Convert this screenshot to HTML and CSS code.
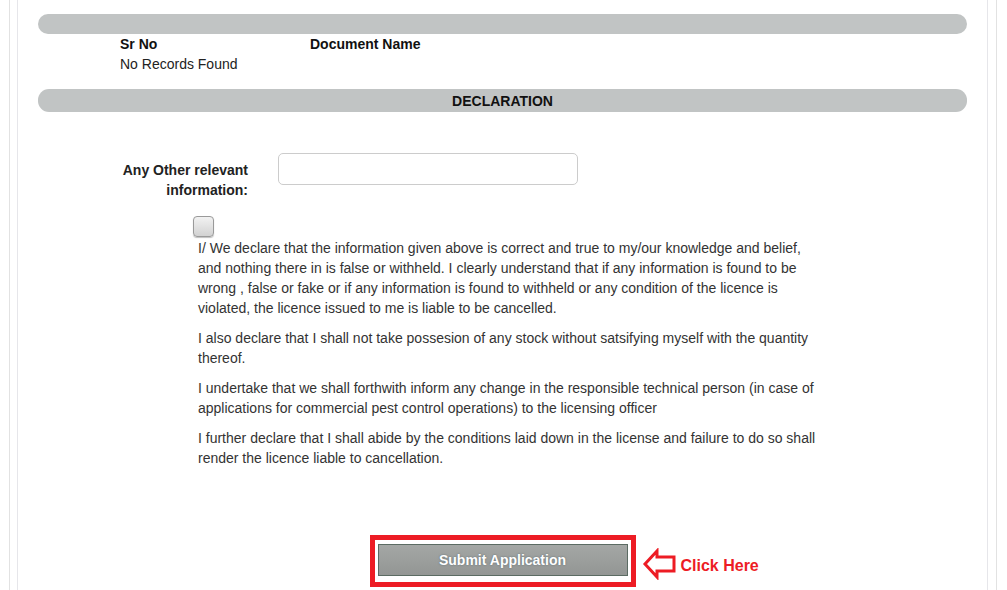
FILE: index.html
```html
<!DOCTYPE html>
<html lang="en">
<head>
  <meta charset="UTF-8">
  <title>Application - Declaration</title>
  <link rel="stylesheet" href="styles.css">
</head>
<body>
  <div class="page">
    <div class="panel">
      <div class="bar bar-empty"></div>

      <table class="docs">
        <tr>
          <th class="col-sr">Sr No</th>
          <th>Document Name</th>
        </tr>
        <tr>
          <td colspan="2">No Records Found</td>
        </tr>
      </table>

      <div class="bar">DECLARATION</div>

      <div class="form-row">
        <label for="otherInfo">Any Other relevant information:</label>
        <input type="text" id="otherInfo">
      </div>

      <div class="declaration">
        <span class="check"></span>
        <p>I/ We declare that the information given above is correct and true to my/our knowledge and belief, and nothing there in is false or withheld. I clearly understand that if any information is found to be wrong , false or fake or if any information is found to withheld or any condition of the licence is violated, the licence issued to me is liable to be cancelled.</p>
        <p>I also declare that I shall not take possesion of any stock without satsifying myself with the quantity thereof.</p>
        <p>I undertake that we shall forthwith inform any change in the responsible technical person (in case of applications for commercial pest control operations) to the licensing officer</p>
        <p>I further declare that I shall abide by the conditions laid down in the license and failure to do so shall render the licence liable to cancellation.</p>
      </div>

      <div class="actions">
        <div class="highlight">
          <button type="button">Submit Application</button>
          <div class="hint">
            <svg width="36" height="32" viewBox="0 0 36 32">
              <polygon points="3,16 15,3 15,9 32,9 32,23 15,23 15,29" fill="none" stroke="#ed1c24" stroke-width="3" stroke-linejoin="miter"/>
            </svg>
            <span>Click Here</span>
          </div>
        </div>
      </div>
    </div>
  </div>
</body>
</html>
```

FILE: styles.css
```css
body {
  margin: 0;
  padding: 0;
  font-family: "Liberation Sans", Arial, sans-serif;
  font-size: 14px;
  color: #222;
  background: #fff;
}

.page {
  margin: 0 10px 0 9px;
  border-left: 1px solid #e2e2e2;
  border-right: 1px solid #e2e2e2;
  padding: 0 8px 0 7px;
}

.panel {
  border-left: 1px solid #e6e6ea;
  border-right: 1px solid #e6e6ea;
  padding: 14px 20px 0 20px;
  height: 576px;
}

.bar {
  background: #c1c4c4;
  border-radius: 11px;
  height: 23px;
  line-height: 24px;
  text-align: center;
  font-weight: bold;
  color: #111;
}

.bar-empty {
  height: 20px;
  border-radius: 10px;
}

.docs {
  border-collapse: collapse;
  margin: 0 0 15px 82px;
}

.docs th,
.docs td {
  padding: 0;
  height: 20px;
  text-align: left;
  vertical-align: middle;
}

.docs th {
  color: #111;
}

.docs .col-sr {
  width: 190px;
}

.form-row {
  display: flex;
  align-items: flex-start;
  gap: 30px;
  margin-top: 41px;
}

.form-row label {
  width: 210px;
  text-align: right;
  font-weight: bold;
  color: #222;
  line-height: 20px;
  padding: 7px 0 0 72px;
  box-sizing: border-box;
}

.form-row input {
  width: 300px;
  height: 32px;
  box-sizing: border-box;
  border: 1px solid #ccc;
  border-radius: 5px;
  padding: 0 8px;
  margin: 0;
  font: inherit;
}

.declaration {
  margin: 16px 0 0 160px;
  width: 620px;
}

.check {
  display: block;
  width: 19px;
  height: 19px;
  border: 1px solid #9a9a9a;
  border-radius: 4px;
  background: linear-gradient(#f2f2f2, #d2d2d2);
  box-shadow: 0 1px 1px rgba(0, 0, 0, 0.25);
  position: relative;
  left: -5px;
}

.declaration p {
  margin: 1px 0 10px 0;
  line-height: 20px;
  color: #333;
}

.actions {
  margin-top: 67px;
  text-align: center;
}

.highlight {
  display: inline-block;
  position: relative;
  border: 5px solid #ed1c24;
  padding: 4px 3px 6px 3px;
  line-height: 0;
}

.highlight button {
  width: 250px;
  height: 32px;
  border: 1px solid #5b6b63;
  background: linear-gradient(#a4a7a5, #939694);
  color: #fff;
  font-family: "Liberation Sans", Arial, sans-serif;
  font-size: 14px;
  font-weight: bold;
  text-shadow: 0 0 2px #5a6a70;
  cursor: pointer;
}

.hint {
  position: absolute;
  left: 267px;
  top: 8px;
  display: flex;
  align-items: center;
  gap: 3px;
  line-height: 20px;
  white-space: nowrap;
}

.hint span {
  color: #ed1c24;
  font-weight: bold;
  font-size: 16px;
  padding-top: 3px;
}
```
